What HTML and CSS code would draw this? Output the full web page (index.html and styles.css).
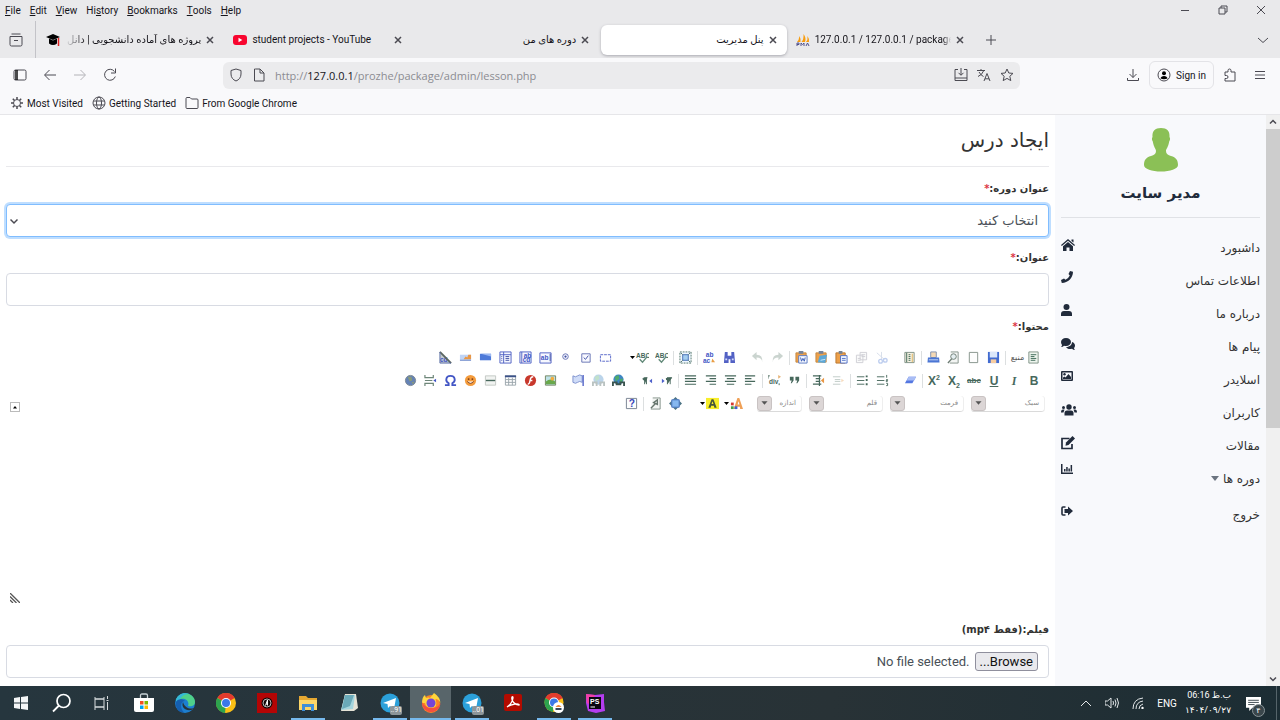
FILE: index.html
```html
<!DOCTYPE html>
<html lang="fa">
<head>
    <meta charset="UTF-8">
    <meta name="viewport" content="width=device-width, initial-scale=1.0">
    <title>پنل مدیریت</title>
    <link rel="stylesheet" href="styles.css">
</head>
<body>
    <!-- menu bar -->
    <header class="menubar">
        <nav class="menus">
            <button><u>F</u>ile</button>
            <button><u>E</u>dit</button>
            <button><u>V</u>iew</button>
            <button>Hi<u>s</u>tory</button>
            <button><u>B</u>ookmarks</button>
            <button><u>T</u>ools</button>
            <button><u>H</u>elp</button>
        </nav>
        <div class="window-buttons">
            <button aria-label="Minimize"><svg class="i10" viewBox="0 0 10 10"><path d="M1 5.5h8" class="line"/></svg></button>
            <button aria-label="Restore"><svg class="i10" viewBox="0 0 10 10"><path d="M1 3h6v6H1zM3 3V1h6v6H7" class="line"/></svg></button>
            <button aria-label="Close"><svg class="i10" viewBox="0 0 10 10"><path d="M1 1l8 8M9 1L1 9" class="line"/></svg></button>
        </div>
    </header>

    <!-- tabs -->
    <div class="tabbar">
        <button class="tab-list" aria-label="Tabs"><svg class="i14" viewBox="0 0 14 14"><path d="M2.500 1h9M1 3.500h12v8a1.500 1.500 0 0 1-1.500 1.500h-9A1.500 1.500 0 0 1 1 11.500zM5 7.500h4" class="line"/></svg></button>
        <div class="tabs">
            <div class="tab">
                <svg class="i14" viewBox="0 0 14 14"><path d="M7 1l7 3-7 3-7-3z"/><path d="M3 5.500v5q4 3 8 0v-5L7 7.500z"/><path d="M12.500 5v8" stroke="#e02424" stroke-width="1.500"/></svg>
                <span class="tab-title fa fade">پروژه های آماده دانشجویی | دانل</span>
                <button class="tab-close" aria-label="Close tab"><svg class="i8" viewBox="0 0 8 8"><path d="M1 1l6 6M7 1L1 7" class="line bold"/></svg></button>
            </div>
            <div class="tab">
                <svg class="i14" viewBox="0 0 14 14"><rect y="2" width="14" height="10" rx="3" fill="#f8052f"/><path d="M5.500 4.800v4.400L9.300 7z" fill="#fff"/></svg>
                <span class="tab-title">student projects - YouTube</span>
                <button class="tab-close" aria-label="Close tab"><svg class="i8" viewBox="0 0 8 8"><path d="M1 1l6 6M7 1L1 7" class="line bold"/></svg></button>
            </div>
            <div class="tab">
                <span class="tab-title fa">دوره های من</span>
                <button class="tab-close" aria-label="Close tab"><svg class="i8" viewBox="0 0 8 8"><path d="M1 1l6 6M7 1L1 7" class="line bold"/></svg></button>
            </div>
            <div class="tab active">
                <span class="tab-title fa">پنل مدیریت</span>
                <button class="tab-close" aria-label="Close tab"><svg class="i8" viewBox="0 0 8 8"><path d="M1 1l6 6M7 1L1 7" class="line bold"/></svg></button>
            </div>
            <div class="tab">
                <svg class="i14" viewBox="0 0 14 14"><path d="M1 9q2-2 2.500-6 1.500 3 1 6zM5.500 9Q8 6 7.500 1q3 4 1.500 8zM10 9q2-2 1.500-6 2 3 1.500 6z" fill="#f89c0e"/><path d="M1 13v-3h2v1.500H1M5 13v-3l1.500 1.500L8 10v3M10 13l1.500-3 1.500 3" fill="none" stroke="#50518c"/></svg>
                <span class="tab-title fade-end">127.0.0.1 / 127.0.0.1 / package /</span>
                <button class="tab-close" aria-label="Close tab"><svg class="i8" viewBox="0 0 8 8"><path d="M1 1l6 6M7 1L1 7" class="line bold"/></svg></button>
            </div>
        </div>
        <button class="new-tab" aria-label="New tab"><svg class="i10" viewBox="0 0 10 10"><path d="M5 0v10M0 5h10" class="line"/></svg></button>
        <button class="all-tabs" aria-label="List all tabs"><svg class="i10" viewBox="0 0 10 10"><path d="M0 3l5 4.500L10 3" class="line"/></svg></button>
    </div>

    <!-- address bar -->
    <div class="navbar">
        <div class="nav-buttons">
            <button aria-label="Sidebar"><svg class="i14" viewBox="0 0 14 14"><rect x="1" y="2" width="12" height="10" rx="1.500" class="line"/><path d="M2 2h3v10H2z" opacity=".7"/></svg></button>
            <button aria-label="Back"><svg class="i14" viewBox="0 0 14 14"><path d="M13 7H2M6.500 2L1.500 7l5 5" class="line"/></svg></button>
            <button aria-label="Forward" disabled><svg class="i14" viewBox="0 0 14 14"><path d="M1 7h11M7.500 2l5 5-5 5" class="line"/></svg></button>
            <button aria-label="Reload"><svg class="i14" viewBox="0 0 14 14"><path d="M12.300 8.500A5.500 5.500 0 1 1 11.500 3.500M12.500 0.500v4.500H8" class="line"/></svg></button>
        </div>
        <div class="urlbar">
            <svg class="i14" viewBox="0 0 14 14"><path d="M7 1l5 1.500v3.500c0 3.500-2 5.800-5 7-3-1.200-5-3.500-5-7V2.500z" class="line"/></svg>
            <svg class="i14" viewBox="0 0 14 14"><path d="M3.500 1H8l4 4v8H2.500V1zM8 1v4h4" class="line"/></svg>
            <span class="url">http://<b>127.0.0.1</b>/prozhe/package/admin/lesson.php</span>
            <button aria-label="Install"><svg class="i14" viewBox="0 0 14 14"><path d="M4 1.500H1v11h12v-11h-3M1 10h12M7 0v7M4.500 4.800L7 7.300l2.500-2.500" class="line"/></svg></button>
            <button aria-label="Translate"><svg class="i14" viewBox="0 0 14 14"><path d="M0 2.500h8M4 1v1.500M6.500 3Q5 7 1 8.500M2 4q2 3.500 4.500 4.500M7 13l3-7.500L13 13M8 10.800h4" class="line"/></svg></button>
            <button aria-label="Bookmark"><svg class="i14" viewBox="0 0 14 14"><path d="M7 1l1.800 4 4.200.4-3.200 2.900 1 4.300L7 10.400l-3.800 2.200 1-4.300L1 5.400 5.200 5z" class="line"/></svg></button>
        </div>
        <div class="nav-buttons end">
            <button aria-label="Downloads"><svg class="i14" viewBox="0 0 14 14"><path d="M7 1v8.500M3.500 6L7 9.500 10.500 6M1.500 10v2.500h11V10" class="line"/></svg></button>
            <button class="sign-in"><svg class="i14" viewBox="0 0 14 14"><circle cx="7" cy="7" r="6" class="line"/><circle cx="7" cy="5.300" r="2"/><path d="M3.500 10.500Q4 8 7 8t3.500 2.500Q7 12 3.500 10.500z"/></svg>Sign in</button>
            <button aria-label="Extensions"><svg class="i14" viewBox="0 0 14 14"><path d="M2 4h3V2.500a1.500 1.500 0 0 1 3 0V4h4v9H2v-2.500h1.500a1.500 1.500 0 0 0 0-3H2z" class="line"/></svg></button>
            <button aria-label="Menu"><svg class="i14" viewBox="0 0 14 14"><path d="M2 3.500h10M2 7h10M2 10.500h10" class="line"/></svg></button>
        </div>
    </div>

    <!-- bookmarks -->
    <nav class="bookmarks">
        <a href="#"><svg class="i14" viewBox="0 0 14 14"><circle cx="7" cy="7" r="3.500" class="line"/><path d="M7 1v2.500M7 10.500V13M1 7h2.500M10.500 7H13M2.800 2.800l1.700 1.700M9.500 9.500l1.700 1.700M2.800 11.200l1.700-1.700M9.500 4.500l1.700-1.700" class="line bold"/></svg>Most Visited</a>
        <a href="#"><svg class="i14" viewBox="0 0 14 14"><circle cx="7" cy="7" r="6" class="line"/><ellipse cx="7" cy="7" rx="2.500" ry="6" class="line"/><path d="M1.500 5h11M1.500 9h11" class="line"/></svg>Getting Started</a>
        <a href="#"><svg class="i14" viewBox="0 0 14 14"><path d="M1 11.500v-9q0-1 1-1h3L6.500 3H12q1 0 1 1v7.500q0 1-1 1H2q-1 0-1-1z" class="line"/></svg>From Google Chrome</a>
    </nav>

    <!-- page -->
    <div class="viewport">
        <div class="page" dir="rtl">
            <aside class="sidebar">
                <svg class="avatar" viewBox="0 0 34 44"><path d="M17 0c6 0 9 3 8.500 9 .8 1 .8 3-.3 4.500C24 20 22 21 22 23c0 3 2 4 5 5 5 1.500 7 4 7 9 0 4-8 6.500-17 6.500S0 41 0 37c0-5 2-7.500 7-9 3-1 5-2 5-5 0-2-2-3-3.200-9.500C7.700 12 7.700 10 8.500 9 8 3 11 0 17 0z" fill="#8bc056"/></svg>
                <h2 class="admin-name">مدیر سایت</h2>
                <ul class="side-menu">
                    <li><a href="#">داشبورد</a><svg class="i14" viewBox="0 0 14 14"><path d="M7 1l7 6-.8.900L7 2.800.8 7.900 0 7z"/><path d="M7 4l5 4.200V13H8.500V9.500h-3V13H2V8.200zM10.500 1.500h2v3l-2-1.500z"/></svg></li>
                    <li><a href="#">اطلاعات تماس</a><svg class="i12" viewBox="0 0 12 12"><path d="M9 0l3 .8C12 7 7 12 .8 12L0 9l3-1.500 1.500 1.300q3-1.500 4.300-4.300L7.500 3z"/></svg></li>
                    <li><a href="#">درباره ما</a><svg class="i12" viewBox="0 0 12 12"><circle cx="5.500" cy="3" r="3"/><path d="M0 12v-2q0-3 3-3h5q3 0 3 3v2z"/></svg></li>
                    <li><a href="#">پیام ها</a><svg class="i14" viewBox="0 0 14 14"><path d="M5 1C8 1 10 3 10 5S8 9 5 9q-1 0-2-.3Q2 10 0 10q1-1 1-2-1-1.500-1-3c0-2 2-4 5-4z"/><path d="M11 5c2 .5 3 2 3 3.500q0 1.500-1 2.500 0 1 1 2-2 0-3-1.200c-3 .8-5-.3-6-1.800 4 0 6-2.500 6-5z"/></svg></li>
                    <li><a href="#">اسلایدر</a><svg class="i12" viewBox="0 0 12 12"><path fill-rule="evenodd" d="M1 1h10q1 0 1 1v8q0 1-1 1H1q-1 0-1-1V2q0-1 1-1zm.5 1.500v7h9v-7z"/><circle cx="3.500" cy="4.300" r="1.200"/><path d="M2 9V7.500l1.500-1L4.500 7.500 7.500 4 10 7v2z"/></svg></li>
                    <li><a href="#">کاربران</a><svg class="i14 wide" viewBox="0 0 16 14"><circle cx="8" cy="4" r="2.700"/><path d="M3.500 12.500V10q0-2.500 2.500-2.500h4q2.500 0 2.500 2.500v2.500z"/><circle cx="2.500" cy="4.500" r="1.500"/><circle cx="13.500" cy="4.500" r="1.500"/><path d="M0 9.500q0-3 2-3h1.500L2.500 9.500zM16 9.500q0-3-2-3h-1.500l1 3z"/></svg></li>
                    <li><a href="#">مقالات</a><svg class="i14" viewBox="0 0 14 14"><path d="M8.500 2.500H1v10h10V8" fill="none" stroke="#212b3b" stroke-width="1.700"/><path d="M11.500 0L14 2.500 7.500 9 4.500 9.700 5 6.500z"/></svg></li>
                    <li class="dropdown"><a href="#">دوره ها <svg class="caret" viewBox="0 0 8 5"><path d="M0 0h8L4 5z"/></svg></a><svg class="i12" viewBox="0 0 12 12"><path d="M0 1h1.500v8.500H12V11H0zM3 6h1.500v2.500H3zM5.200 4h1.500v4.500H5.200zM7.400 5.500h1.500v3H7.400zM9.600 2h1.500v6.500H9.600z"/></svg></li>
                    <li><a href="#">خروج</a><svg class="i12" viewBox="0 0 12 12"><path d="M4.500 2H2q-1 0-1 1v6q0 1 1 1h2.500" fill="none" stroke="#212b3b" stroke-width="1.600"/><path d="M7 1.500L12 6l-5 4.500V8H3.500V4H7z"/></svg></li>
                </ul>
            </aside>

            <main class="content">
                <h1 class="title">ایجاد درس</h1>
                <form>
                    <div class="form-group">
                        <label for="course">عنوان دوره:<i class="req">*</i></label>
                        <div class="select-wrap">
                            <select id="course" class="form-control focused"><option>انتخاب کنید</option></select>
                            <svg class="i8" viewBox="0 0 8 8"><path d="M.5 2.500L4 6l3.500-3.500" class="line bold"/></svg>
                        </div>
                    </div>
                    <div class="form-group">
                        <label for="name">عنوان:<i class="req">*</i></label>
                        <input id="name" type="text" class="form-control">
                    </div>

                    <div class="form-group">
                        <label for="body">محتوا:<i class="req">*</i></label>
                        <div class="editor">
                            <div class="toolbar">
                                <div class="tool-row">
                                    <div class="tools">
                                        <button type="button" class="source"><svg viewBox="0 0 14 14"><path d="M2 1h10v12H2z" fill="#eef5ee" stroke="#7d9184"/><path d="M4 4h6M4 6h4M4 8h6M4 10h5" stroke="#386652"/></svg>منبع</button>
                                        <span class="sep"></span>
                                        <button type="button" aria-label="Save"><svg viewBox="0 0 14 14"><path d="M1 1h12v12H1z" fill="#416bd0"/><path d="M3 1h8v6H3z" fill="#dbe7fa"/><path d="M4 9h6v4H4z" fill="#f8cda0"/></svg></button>
                                        <button type="button" aria-label="New page"><svg viewBox="0 0 14 14"><path d="M2.500 1.500h9v11h-9z" fill="#fdfdfd" stroke="#839188"/></svg></button>
                                        <button type="button" aria-label="Preview"><svg viewBox="0 0 14 14"><path d="M4 1h8v12H3" fill="#f3f5f3" stroke="#839188"/><circle cx="7" cy="6" r="3" fill="#e4eef0" stroke="#6d7c74"/><path d="M5 8.500L1 13" stroke="#6d7c74" stroke-width="1.500"/></svg></button>
                                        <button type="button" aria-label="Print"><svg viewBox="0 0 14 14"><path d="M4 1h6v6H4z" fill="#f5d9b4" stroke="#7c8fae"/><path d="M1 7h12l.5 5.500H.5z" fill="#4b76d4"/><path d="M2 9.500h10" stroke="#cad9f6"/></svg></button>
                                        <span class="sep"></span>
                                        <button type="button" aria-label="Templates"><svg viewBox="0 0 14 14"><path d="M2 1.500h10v11H2z" fill="#f6f1e2" stroke="#809186"/><path d="M4 2v10M6 4h2M6 6h2M6 8h2M6 10h2" stroke="#386652"/><path d="M10 3v9" stroke="#e0b45f"/></svg></button>
                                    </div>
                                    <div class="tools">
                                        <button type="button" aria-label="Cut" disabled><svg viewBox="0 0 14 14"><path d="M2 2l8 7M7 1v8" stroke="#8b9fc4"/><circle cx="6" cy="11" r="2" fill="none" stroke="#4976d2" stroke-width="1.500"/><circle cx="11" cy="10" r="2" fill="none" stroke="#4976d2" stroke-width="1.500"/></svg></button>
                                        <button type="button" aria-label="Copy" disabled><svg viewBox="0 0 14 14"><path d="M1.500 4.500h7v8h-7zM5.500 1.500h7v8h-7z" fill="#f3f5f5" stroke="#778"/><path d="M7 4h4M7 6h4M3 8h3M3 10h3" stroke="#778"/></svg></button>
                                        <button type="button" aria-label="Paste"><svg viewBox="0 0 14 14"><path d="M1 2h10v11H1z" fill="#eda04a" stroke="#b8762f"/><path d="M4 0h4v3H4z" fill="#768392"/><path d="M6 5h7v8H6z" fill="#f5f8ff" stroke="#4b6ec7"/><path d="M7.500 8h4M7.500 10h4" stroke="#4b6ec7"/></svg></button>
                                        <button type="button" aria-label="Paste text"><svg viewBox="0 0 14 14"><path d="M1 2h11v10H1z" fill="#eda04a" stroke="#c28843"/><path d="M4 0h5v3H4z" fill="#75839a"/><path d="M5 5l8-1-2 9-8-1z" fill="#5da8d8"/><path d="M6 10l5-1" stroke="#d3ecfa"/></svg></button>
                                        <button type="button" aria-label="Paste from Word"><svg viewBox="0 0 14 14"><path d="M1 2h11v10H1z" fill="#eda04a" stroke="#c28843"/><path d="M4 0h5v3H4z" fill="#75839a"/><path d="M4 5h9v8H4z" fill="#f6f9ff" stroke="#5877c2"/><path d="M6 7l1 4 1.500-3L10 11l1-4" fill="none" stroke="#3458b4"/></svg></button>
                                        <span class="sep"></span>
                                        <button type="button" aria-label="Redo" disabled><svg viewBox="0 0 14 14"><path d="M2 12q0-5 6-5v3l5-4.500L8 1v3Q1 4 2 12z" fill="#6b8577"/></svg></button>
                                        <button type="button" aria-label="Undo" disabled><svg viewBox="0 0 14 14"><path d="M12 12q0-5-6-5v3L1 5.500 6 1v3q7 0 6 8z" fill="#6b8577"/></svg></button>
                                    </div>
                                    <div class="tools">
                                        <button type="button" aria-label="Find"><svg viewBox="0 0 14 14"><path d="M2 1h3v4h4V1h3l1 12H8V9H6v4H1z" fill="#5261c4"/><path d="M2.500 9h2M9.500 9h2" stroke="#d1d8ff" stroke-width="2"/></svg></button>
                                        <button type="button" aria-label="Replace"><svg viewBox="0 0 14 14"><text x="3" y="6" class="glyph blue">ab</text><text x="0" y="13" class="glyph blue">ac</text><path d="M10 8l3 4H9z" fill="#e99d45"/></svg></button>
                                        <span class="sep"></span>
                                        <button type="button" aria-label="Select all"><svg viewBox="0 0 14 14"><path d="M1 1h12v12H1z" fill="#eff7ff" stroke="#507469" stroke-dasharray="2 1"/><path d="M4 4h6v6H4z" fill="#a5cff0" stroke="#446db5"/><path d="M2 2l2 2M12 2l-2 2M2 12l2-2M12 12l-2-2" stroke="#507469"/></svg></button>
                                        <span class="sep"></span>
                                        <button type="button" aria-label="Check spelling"><svg viewBox="0 0 14 14"><text x="0" y="7" class="glyph green">ABC</text><path d="M4 9l3 3 5-6" fill="none" stroke="#628a79" stroke-width="1.500"/></svg></button>
                                        <button type="button" class="split" aria-label="Spell check as you type"><svg viewBox="0 0 14 14"><text x="0" y="7" class="glyph green">ABC</text><path d="M4 9l3 3 5-6" fill="none" stroke="#628a79" stroke-width="1.500"/></svg><svg class="arrow" viewBox="0 0 5 3"><path d="M0 0h5L2.500 3z"/></svg></button>
                                    </div>
                                    <div class="tools fields">
                                        <button type="button" aria-label="Form"><svg viewBox="0 0 14 14"><path d="M1.500 4h11v7h-11z" fill="none" stroke="#5465c8" stroke-dasharray="3 1"/></svg></button>
                                        <button type="button" aria-label="Checkbox"><svg viewBox="0 0 14 14"><path d="M3 3h9v9H3z" fill="#f8f9ff" stroke="#6370b2"/><path d="M5 7l2 2 3-4" fill="none" stroke="#3b4ca2"/></svg></button>
                                        <button type="button" aria-label="Radio"><svg viewBox="0 0 14 14"><circle cx="7" cy="6" r="3" fill="#f8f9ff" stroke="#6370b2"/><circle cx="7" cy="6" r="1.200" fill="#3b4ca2"/></svg></button>
                                        <button type="button" aria-label="Text field"><svg viewBox="0 0 14 14"><path d="M1 2h12v11H1z" fill="#f6f8ff" stroke="#4e5fc3"/><text x="2" y="10" class="glyph blue">ab</text><path d="M12 3v8" stroke="#3b4ca2"/></svg></button>
                                        <button type="button" aria-label="Textarea"><svg viewBox="0 0 14 14"><path d="M1 1h12v12H1z" fill="#f6f8ff" stroke="#4e5fc3"/><text x="5" y="7" class="glyph blue">ab</text><text x="4" y="12" class="glyph blue">cd</text><path d="M3 1v12" stroke="#4e5fc3"/></svg></button>
                                        <button type="button" aria-label="Selection field"><svg viewBox="0 0 14 14"><path d="M1 1h12v12H1zM5 1v12M1 4h12" fill="#f6f8ff" stroke="#4e5fc3"/><path d="M7 6h4M7 8h4M7 10h4M2.500 6h1M2.500 8h1M2.500 10h1" stroke="#3b4ca2"/></svg></button>
                                        <button type="button" aria-label="Button"><svg viewBox="0 0 14 14"><path d="M1 3h12v7H1z" fill="#4e7ad9"/><path d="M2 3h11v3z" fill="#9db9f3"/></svg></button>
                                        <button type="button" aria-label="Image button"><svg viewBox="0 0 14 14"><path d="M1 4h12v6H1z" fill="#bfd4f6"/><path d="M5 9l2-3 2 1 1-3h3v5z" fill="#e99745"/><path d="M1 10h12" stroke="#6c87c8"/></svg></button>
                                        <button type="button" aria-label="Hidden field"><svg viewBox="0 0 14 14"><path d="M1 1v12h12z" fill="#c3cad0"/><text x="1" y="12" class="glyph blue">cd</text><path d="M1 1l12 12" stroke="#5b6660" stroke-width="2"/><path d="M1 1v12h12" fill="none" stroke="#546aa4"/></svg></button>
                                    </div>
                                </div>

                                <div class="tool-row">
                                    <div class="tools">
                                        <button type="button" class="t"><b>B</b></button>
                                        <button type="button" class="t serif"><i>I</i></button>
                                        <button type="button" class="t"><u>U</u></button>
                                        <button type="button" class="t small"><s>abc</s></button>
                                        <button type="button" class="t" dir="ltr">X<sub>2</sub></button>
                                        <button type="button" class="t" dir="ltr">X<sup>2</sup></button>
                                        <span class="sep"></span>
                                        <button type="button" aria-label="Remove format"><svg viewBox="0 0 14 14"><path d="M5 3h8l-4 7H1z" fill="#5477e1"/><path d="M5 3h8l-2 4H3z" fill="#a9bdf5"/></svg></button>
                                    </div>
                                    <div class="tools">
                                        <button type="button" aria-label="Numbered list"><svg viewBox="0 0 14 14"><path d="M1 3h8M1 7h8M1 11h8M11.500 1v3M11 6h1.500v1H11v1h1.500M11 10h1.500v2.500H11" fill="none" stroke="#47685c"/></svg></button>
                                        <button type="button" aria-label="Bulleted list"><svg viewBox="0 0 14 14"><path d="M1 3h8M1 7h8M1 11h8" stroke="#47685c"/><path d="M10.500 1.500h2v2h-2zM10.500 5.500h2v2h-2zM10.500 10h2v2h-2z" fill="#47685c"/></svg></button>
                                        <span class="sep"></span>
                                        <button type="button" aria-label="Increase indent"><svg viewBox="0 0 14 14"><path d="M1 3h8M3 6h6M3 8h6M1 11h8" stroke="#47685c" opacity=".35"/><path d="M10 5l3 2-3 2z" fill="#e99745" opacity=".35"/></svg></button>
                                        <button type="button" aria-label="Decrease indent"><svg viewBox="0 0 14 14"><path d="M1 2h9M4 5h5M4 8h5M1 11h9M8 1v12" stroke="#47685c" stroke-width="1.300"/><path d="M13 4L9.500 7l3.500 3z" fill="#e99745"/></svg></button>
                                        <span class="sep"></span>
                                        <button type="button" aria-label="Quote"><svg viewBox="0 0 14 14"><path d="M2 3h4v4l-2 3H3l1-3H2zM8 3h4v4l-2 3H9l1-3H8z" fill="#47685c"/></svg></button>
                                        <button type="button" aria-label="Div container"><svg viewBox="0 0 14 14"><text x="1" y="11" class="glyph green">div</text><path d="M0 5V2h2M12 10v2" fill="none" stroke="#47685c"/><path d="M11 1l3 2-3 2z" fill="#e7b478"/></svg></button>
                                        <span class="sep"></span>
                                        <button type="button" aria-label="Align left"><svg viewBox="0 0 14 14"><path d="M1 2h11M1 5h7M1 8h11M1 11h7" class="rule"/></svg></button>
                                        <button type="button" aria-label="Center"><svg viewBox="0 0 14 14"><path d="M1 2h12M3 5h8M1 8h12M3 11h8" class="rule"/></svg></button>
                                        <button type="button" aria-label="Align right"><svg viewBox="0 0 14 14"><path d="M2 2h11M6 5h7M2 8h11M6 11h7" class="rule"/></svg></button>
                                        <button type="button" aria-label="Justify"><svg viewBox="0 0 14 14"><path d="M1 2h12M1 5h12M1 8h12M1 11h12" class="rule"/></svg></button>
                                        <span class="sep"></span>
                                        <button type="button" aria-label="Left to right"><svg viewBox="0 0 14 14"><path d="M8 11V4h5M11 4v7M8 4q-3 1 0 3" fill="#47685c" stroke="#47685c"/><path d="M2 5l3 2.500L2 10z" fill="#4c5fca"/></svg></button>
                                        <button type="button" aria-label="Right to left"><svg viewBox="0 0 14 14"><path d="M5 11V4h3M7 4v7M5 4Q1 5 5 7" fill="#47685c" stroke="#47685c"/><path d="M13 5l-3 2.500 3 2.500z" fill="#4c5fca"/></svg></button>
                                    </div>
                                    <div class="tools">
                                        <button type="button" aria-label="Link"><svg viewBox="0 0 14 14"><circle cx="7" cy="6" r="5.500" fill="#3f86c4"/><path d="M3 3l4-2 1 4-4 3zM9 5l3 0-1 4H8z" fill="#4eaa6c"/><path d="M1 13V9h4v2h4V9h4v4" fill="none" stroke="#3c5550" stroke-width="2"/></svg></button>
                                        <button type="button" aria-label="Unlink" disabled><svg viewBox="0 0 14 14"><circle cx="7" cy="6" r="5.500" fill="#3f86c4"/><path d="M3 3l4-2 1 4-4 3z" fill="#4eaa6c"/><path d="M1 13V9h4v4M9 13V9h4v4" fill="none" stroke="#3c5550" stroke-width="2"/></svg></button>
                                        <button type="button" aria-label="Anchor"><svg viewBox="0 0 14 14"><path d="M1 2q3 2 5 0t5 0v7q-3-2-5 0t-5 0z" fill="#cfdcf8" stroke="#7b8fcc"/><path d="M12 1v12" stroke="#5465c8" stroke-width="1.500"/></svg></button>
                                    </div>
                                    <div class="tools">
                                        <button type="button" aria-label="Image"><svg viewBox="0 0 14 14"><path d="M1.500 2h11v10h-11z" fill="#bfe2e8" stroke="#71845e"/><path d="M2 11V8q5-4 10 0v3z" fill="#69a94c"/><circle cx="9" cy="5" r="2" fill="#f2ad3f"/></svg></button>
                                        <button type="button" aria-label="Flash"><svg viewBox="0 0 14 14"><circle cx="7" cy="7" r="6" fill="#c8382c"/><path d="M10 3Q7 3 6.500 7T4 11M6 7h3" fill="none" stroke="#fff" stroke-width="1.500"/></svg></button>
                                        <button type="button" aria-label="Table"><svg viewBox="0 0 14 14"><path d="M1.500 2h11v10h-11zM1.500 6h11M1.500 9h11M5 4v8M9 4v8" fill="#fff" stroke="#98a4ab"/><path d="M1 2.500h12" stroke="#3b5188" stroke-width="2"/></svg></button>
                                        <button type="button" aria-label="Horizontal line"><svg viewBox="0 0 14 14"><path d="M1.500 2h11v10h-11z" fill="#f1f3f1" stroke="#c1c7c2"/><path d="M2 7h10" stroke="#47685c" stroke-width="1.500"/></svg></button>
                                        <button type="button" aria-label="Smiley"><svg viewBox="0 0 14 14"><circle cx="7" cy="7" r="6" fill="#f39b3c"/><circle cx="5" cy="5.500" r="1" fill="#7b3a14"/><circle cx="9" cy="5.500" r="1" fill="#7b3a14"/><path d="M3.500 8q3.500 4 7 0" fill="#fff" stroke="#7b3a14"/></svg></button>
                                        <button type="button" aria-label="Special character"><svg viewBox="0 0 14 14"><path d="M1 12h4v-2Q2 8 2.500 5.500 3 2 7 2t4.500 3.500Q12 8 9 10v2h4" fill="none" stroke="#4356c5" stroke-width="2"/></svg></button>
                                        <button type="button" aria-label="Page break"><svg viewBox="0 0 14 14"><path d="M1 1v3h9V1M1 13v-3h9v3M1 7h8" fill="none" stroke="#6e8679" stroke-width="1.300"/><path d="M13 5l-3 2 3 2z" fill="#4356c5"/></svg></button>
                                        <button type="button" aria-label="IFrame"><svg viewBox="0 0 14 14"><circle cx="7" cy="7" r="5.500" fill="#6482b6" stroke="#7c8893"/><path d="M4 3l4 0 1 4-3 1zM8 9l3-1-1 3z" fill="#8a9a79"/></svg></button>
                                    </div>
                                </div>

                                <div class="tool-row">
                                    <button type="button" class="combo"><span>سبک</span><svg class="combo-arrow" viewBox="0 0 15 15"><path d="M4 5h7L7.500 9z"/></svg></button>
                                    <button type="button" class="combo"><span>فرمت</span><svg class="combo-arrow" viewBox="0 0 15 15"><path d="M4 5h7L7.500 9z"/></svg></button>
                                    <button type="button" class="combo"><span>قلم</span><svg class="combo-arrow" viewBox="0 0 15 15"><path d="M4 5h7L7.500 9z"/></svg></button>
                                    <button type="button" class="combo short"><span>اندازه</span><svg class="combo-arrow" viewBox="0 0 15 15"><path d="M4 5h7L7.500 9z"/></svg></button>
                                    <div class="tools colors">
                                        <button type="button" class="split" aria-label="Text color"><svg viewBox="0 0 14 14"><path d="M4 13L8 1h2l4 12h-3l-.5-2.500h-3L7 13zM8.200 8h2L9.200 4.500z" fill="#efa057"/><path d="M1 6h3v3H1z" fill="#d43b30"/><path d="M1 10h3v3H1z" fill="#3fa04a"/><path d="M5 10h3v3H5z" fill="#3f61d4"/></svg><svg class="arrow" viewBox="0 0 5 3"><path d="M0 0h5L2.500 3z"/></svg></button>
                                        <button type="button" class="split" aria-label="Background color"><svg viewBox="0 0 14 14"><path d="M0 1h14v12H0z" fill="#f8ee2b"/><path d="M2.500 11.500L6 2.500h2l3.500 9H9l-.5-2h-3l-.5 2zM6 7.500h2l-1-3z" fill="#47563b"/></svg><svg class="arrow" viewBox="0 0 5 3"><path d="M0 0h5L2.500 3z"/></svg></button>
                                    </div>
                                    <div class="tools view">
                                        <button type="button" aria-label="Maximize"><svg viewBox="0 0 14 14"><path d="M7 0l3 3H4zM7 14l3-3H4zM0 7l3-3v6zM14 7l-3-3v6z" fill="#4c7485"/><path d="M3 3h8v8H3z" fill="#86b8ef" stroke="#3f6db7"/></svg></button>
                                        <button type="button" aria-label="Show blocks"><svg viewBox="0 0 14 14"><path d="M4 1h8v12H2" fill="#f3f5f3" stroke="#839188"/><path d="M5 6l4-3v5zM2 12l5-5" fill="none" stroke="#66756d" stroke-width="1.500"/></svg></button>
                                        <span class="sep"></span>
                                        <button type="button" aria-label="About"><svg viewBox="0 0 14 14"><path d="M1.500 1.500h11v11h-11z" fill="#fdfdfd" stroke="#75808f"/><text x="4" y="11" class="glyph help">?</text></svg></button>
                                    </div>
                                </div>
                                <button type="button" class="collapse" aria-label="Collapse toolbar"><svg viewBox="0 0 8 8"><path d="M2 5.500h4L4 3z"/></svg></button>
                            </div>
                            <textarea id="body" class="editor-body"></textarea>
                            <svg class="resizer" viewBox="0 0 10 10"><path d="M0 0l10 10M0 3.500L6.500 10M0 7l3 3" stroke="#555" stroke-width="1.300"/></svg>
                        </div>
                    </div>

                    <div class="form-group">
                        <label for="film">فیلم:(فقط mp۴)</label>
                        <label class="form-control file-box">
                            <input id="film" type="file" class="file-input">
                            <span class="browse">Browse...</span>
                            <span dir="ltr">No file selected.</span>
                        </label>
                    </div>
                </form>
            </main>
        </div>
        <div class="scrollbar">
            <svg class="i14" viewBox="0 0 14 14"><path d="M4 8.500l3-3 3 3" class="line bold"/></svg>
            <div class="track"><div class="thumb"></div></div>
            <svg class="i14" viewBox="0 0 14 14"><path d="M4 5.500l3 3 3-3" class="line bold"/></svg>
        </div>
    </div>

    <!-- taskbar -->
    <footer class="taskbar">
        <div class="apps">
            <button aria-label="Start"><svg viewBox="0 0 20 20"><path d="M3 5l6-1v5.500H3zM10 4l7-1v6.500h-7zM3 10.500h6V16l-6-1zM10 10.500h7V17l-7-1z" fill="#f4f6f7"/></svg></button>
            <button aria-label="Search"><svg viewBox="0 0 20 20"><circle cx="11.500" cy="8" r="6.500" fill="none" stroke="#fff" stroke-width="1.700"/><path d="M7 12.500L1 18.500" stroke="#fff" stroke-width="1.800"/></svg></button>
            <button aria-label="Task view"><svg viewBox="0 0 20 20"><path d="M2 4v2h9V4M2 17v-3h9v3M2 6h9v8H2zM14.500 3v3M14.500 9v8M13.500 7.500h2" fill="none" stroke="#d7dcde"/></svg></button>
            <button aria-label="Store"><svg viewBox="0 0 20 20"><path d="M6.500 5V2.500q0-1.500 1.500-1.500h4q1.500 0 1.500 1.500V5" fill="none" stroke="#c8d2d6" stroke-width="1.300"/><path d="M0 5h20v12q0 2-2 2H2q-2 0-2-2z" fill="#fff"/><path d="M6 8h3.500v3.500H6z" fill="#f25022"/><path d="M10.500 8H14v3.500h-3.500z" fill="#7fba00"/><path d="M6 12.500h3.500V16H6z" fill="#00a4ef"/><path d="M10.500 12.500H14V16h-3.500z" fill="#ffb900"/></svg></button>
            <button aria-label="Edge"><svg viewBox="0 0 20 20"><circle cx="10" cy="10" r="10" fill="#1d7fd0"/><path d="M1 7C3 1 9-1 14 1c4 1.500 6 5 6 8 0 4-4 5-7 4 2-5-3-8-7-7-2 .3-4 1-5 2z" fill="#4fd08a"/><path d="M1 7C3 1 9-1 14 1c-4 0-8 2-9 6-2 0-3 1-4 2z" fill="#35b8d8"/><path d="M8 9c-2 5 2 9 8 8 1-.3 2-1 2.500-2-3 1.500-9 0-10.500-6z" fill="#26343b"/><path d="M1 9c1-3 6-4 9-1-4 0-6 6-1 11.500C4 20 0 15 1 9z" fill="#155fb0"/></svg></button>
            <button aria-label="Chrome"><svg viewBox="0 0 20 20"><circle cx="10" cy="10" r="10" fill="#fbc116"/><path d="M10 10L1.300 5A10 10 0 0 1 18.700 5z" fill="#e33b2e"/><path d="M10 10L1.300 5a10 10 0 0 0 7.700 15z" fill="#2da44e"/><circle cx="10" cy="10" r="5" fill="#fff"/><circle cx="10" cy="10" r="4" fill="#3b78e7"/></svg></button>
            <button aria-label="Recorder"><svg viewBox="0 0 20 20"><path d="M0 0h20v20H0z" fill="#b40505"/><circle cx="10" cy="10" r="5.500" fill="#130808"/><circle cx="10" cy="10" r="4" fill="none" stroke="#ddd" stroke-width=".8"/><path d="M8.500 12.500L10.500 7v5.500M9 11h2" fill="none" stroke="#fff"/></svg></button>
            <button class="running" aria-label="Explorer"><svg viewBox="0 0 20 20"><path d="M1 3h7l2 2h9v12H1z" fill="#e5a832"/><path d="M1 7h18v10H1z" fill="#fcd668"/><path d="M4 18v-7h12v7h-3v-4H7v4z" fill="#3f8fd8"/></svg></button>
            <button aria-label="Notepad"><svg viewBox="0 0 20 20"><path d="M6 1h11l2 14-4 3H2z" fill="#e5e3d6"/><path d="M6 2h10l-2 14-12 1z" fill="#a5d5dd"/><path d="M6 2h9l-4 11-8 3z" fill="#6aaab9"/></svg></button>
            <button class="running" aria-label="Telegram"><svg viewBox="0 0 20 20"><circle cx="10" cy="10" r="9.500" fill="#2ba0da"/><path d="M3 10l13-5-2 11-4-3-2 2-.5-4z" fill="#fff"/></svg><span class="count">..91</span></button>
            <button class="running current" aria-label="Firefox"><svg viewBox="0 0 20 20"><circle cx="10" cy="11" r="9" fill="#fb8426"/><path d="M1 10Q1 4 4 2l1 3q3-1 4 0L13 0q6 4 6.500 10-2-4-5-4 3 9-4.500 9-5 0-6-5z" fill="#ffd43b"/><circle cx="10" cy="10" r="4.500" fill="#7544d8"/><path d="M1 9c0 7 5 10.500 10 10 5-.5 8-4 8.500-9-2 4-5 5-9 5S3 13 1 9z" fill="#f4503f"/></svg></button>
            <button class="running" aria-label="Telegram"><svg viewBox="0 0 20 20"><circle cx="10" cy="10" r="9.500" fill="#2ba0da"/><path d="M3 10l13-5-2 11-4-3-2 2-.5-4z" fill="#fff"/></svg><span class="count">..01</span></button>
            <button aria-label="Acrobat"><svg viewBox="0 0 20 20"><rect x="1" y="1" width="18" height="17" rx="2" fill="#b30b00"/><path d="M4 14q5-3 6-9 0-2-1-1c-1 4 3 8 7 8 1-2-8-1-12 2z" fill="none" stroke="#fff" stroke-width="1.300"/></svg></button>
            <button class="running" aria-label="Chrome profile"><svg viewBox="0 0 20 20"><circle cx="10" cy="9.500" r="9.500" fill="#fbc116"/><path d="M10 10L1.300 5A10 10 0 0 1 18.700 5z" fill="#e33b2e"/><path d="M10 10L1.300 5a10 10 0 0 0 7.700 14z" fill="#2da44e"/><circle cx="10" cy="9.500" r="5" fill="#fff"/><circle cx="10" cy="9.500" r="4" fill="#3b78e7"/><circle cx="14.500" cy="14.500" r="5.500" fill="#fff"/><path d="M11.500 14q3-4 6 0z" fill="#e9853a"/><path d="M11.500 15h6v2h-6z" fill="#37475d"/></svg></button>
            <button class="running" aria-label="PhpStorm"><svg viewBox="0 0 20 20"><path d="M1 1l9 1 9-1v8l1 9-9 2-8-2-2-8z" fill="#b53df0"/><path d="M1 1l9 1-4 10-4-2z" fill="#f23fa3"/><path d="M4 4h12v12H4z" fill="#0b0712"/><path d="M5.500 14h4.500" stroke="#fff"/><text x="5" y="11" class="glyph ps">PS</text></svg></button>
        </div>
        <div class="tray">
            <svg class="i12" viewBox="0 0 12 12"><path d="M1 9l5-5 5 5" class="light"/></svg>
            <svg class="i14" viewBox="0 0 14 14"><path d="M0 5h2.500L6 2v10L2.500 9H0zM8 5q1 2 0 4M10 3.500q2 3.500 0 7M12 2q3 5 0 10" class="light"/></svg>
            <svg class="i12" viewBox="0 0 12 12"><path d="M1 12Q1 2 11 1M4 12q0-7 7-8M7 12q0-4 4-5" class="light"/><circle cx="10.500" cy="11" r="1.200" fill="#fff"/></svg>
            <span>ENG</span>
            <div class="clock"><span>06:16 ب.ظ</span><span>۱۴۰۴/۰۹/۲۷</span></div>
            <button class="notify" aria-label="Notifications"><svg class="notify-icon" viewBox="0 0 14 14"><path d="M0 1h14v10H6l-3 3v-3H0z" fill="#fff"/><path d="M2 4h10M2 6h10M2 8h6" stroke="#26343b" stroke-width=".8"/></svg><span class="badge">۴</span></button>
        </div>
    </footer>
</body>
</html>
```

FILE: styles.css
```css
/* reset */
* {
    margin: 0;
    padding: 0;
    box-sizing: border-box;
}

body {
    display: flex;
    flex-direction: column;
    height: 100vh;
    overflow: hidden;
    background-color: #fff;
    color: #15141a;
    font-family: Roboto, "Open Sans", "DejaVu Sans", sans-serif;
    font-size: 10px;
}

button {
    display: flex;
    align-items: center;
    justify-content: center;
    flex: none;
    border: 0;
    background: none;
    color: inherit;
    font: inherit;
}

a {
    color: inherit;
    text-decoration: none;
}

svg {
    flex: none;
}

.line {
    fill: none;
    stroke: #4b4a52;
    stroke-width: 1;
}

.line.bold {
    stroke-width: 1.5;
}

.light {
    fill: none;
    stroke: #e3e7e9;
}

.i8 { width: 8px; height: 8px; }
.i10 { width: 10px; height: 10px; }
.i12 { width: 12px; height: 12px; }
.i14 { width: 14px; height: 14px; }
.i14.wide { width: 16px; }

/* menu bar */
.menubar {
    display: flex;
    justify-content: space-between;
    align-items: center;
    flex: none;
    height: 20px;
    padding: 0 14px 0 5px;
    background-color: #e9e9eb;
}

.menus {
    display: flex;
    gap: 9px;
}

.window-buttons {
    display: flex;
    gap: 28px;
}

/* tabs */
.tabbar {
    display: flex;
    align-items: center;
    flex: none;
    height: 38px;
    padding-top: 1px;
    background-color: #e9e9eb;
}

.tab-list {
    width: 36px;
    height: 37px;
    padding-right: 3px;
    border-right: 1px solid #c3c3c8;
}

.tabs {
    display: flex;
    flex: 0 1 935px;
    gap: 2px;
    margin-left: 3px;
}

.tab {
    display: flex;
    align-items: center;
    flex: 1;
    gap: 5px;
    min-width: 0;
    height: 30px;
    padding: 0 10px 0 7px;
    border-radius: 6px;
}

.tab.active {
    background-color: #fff;
    box-shadow: 0 1px 3px #a9a9b0;
}

.tab-title {
    flex: 1;
    min-width: 0;
    white-space: nowrap;
}

.tab-title.fa {
    direction: rtl;
}

.tab-title.fade {
    mask-image: linear-gradient(to right, transparent, #000 20px);
}

.tab-title.fade-end {
    mask-image: linear-gradient(to left, transparent, #000 8px);
}

.new-tab {
    margin-left: 12px;
}

.all-tabs {
    margin-left: auto;
    margin-right: 12px;
}

/* address bar */
.navbar {
    display: flex;
    align-items: center;
    flex: none;
    height: 34px;
    padding: 0 13px;
    background-color: #f9f9fb;
}

.nav-buttons {
    display: flex;
    align-items: center;
    gap: 16px;
}

.nav-buttons.end {
    gap: 9px;
}

.nav-buttons.end button:last-child {
    margin-left: 7px;
}

.nav-buttons button:disabled {
    opacity: 0.4;
}

.urlbar {
    display: flex;
    align-items: center;
    flex: 1;
    gap: 9px;
    height: 27px;
    margin: 0 106px;
    padding: 0 6px;
    border-radius: 6px;
    background-color: #ebebed;
}

.url {
    flex: 1;
    color: #8b8b92;
    font-family: "Open Sans", sans-serif;
    font-size: 11px;
}

.url b {
    color: #15141a;
    font-weight: 400;
}

.sign-in {
    gap: 5px;
    height: 28px;
    padding: 0 7px;
    border: 1px solid #e3e3e7;
    border-radius: 6px;
}

/* bookmarks */
.bookmarks {
    display: flex;
    align-items: center;
    flex: none;
    gap: 9px;
    height: 23px;
    padding: 0 10px;
    border-bottom: 1px solid #e6e6e9;
    background-color: #f9f9fb;
}

.bookmarks a {
    display: flex;
    align-items: center;
    gap: 3px;
}

/* page */
.viewport {
    display: flex;
    flex: 1;
    min-height: 0;
}

.page {
    display: grid;
    grid-template-columns: 1fr 5fr;
    flex: 1;
    min-width: 0;
    overflow: hidden;
    color: #333;
    font-family: "DejaVu Sans", sans-serif;
    font-size: 12px;
}

.sidebar {
    padding: 13px 6px;
    background-color: #f8f9fc;
}

.avatar {
    display: block;
    width: 34px;
    height: 44px;
    margin: 0 auto;
}

.admin-name {
    height: 46px;
    border-bottom: 1px solid #e0e2e6;
    color: #212b3b;
    font-size: 15px;
    line-height: 42px;
    text-align: center;
}

.side-menu {
    padding-top: 13px;
    list-style: none;
}

.side-menu li {
    display: flex;
    justify-content: space-between;
    height: 33px;
    line-height: 34px;
}

.side-menu li > svg {
    margin-top: 7px;
    fill: #212b3b;
}

.side-menu .dropdown {
    height: 36px;
}

.side-menu .dropdown > svg {
    margin-top: 1px;
}

.caret {
    width: 8px;
    height: 5px;
    margin-bottom: 2px;
    fill: #6b7480;
}

/* form */
.content {
    min-width: 0;
    padding: 0 6px;
}

.title {
    height: 52px;
    margin-bottom: 10px;
    border-bottom: 1px solid #e9e9ec;
    font-size: 20px;
    font-weight: 400;
    line-height: 50px;
}

.form-group {
    margin-bottom: 9px;
}

.form-group > label:first-child {
    display: block;
    height: 27px;
    font-size: 10px;
    font-weight: 700;
    line-height: 24px;
}

.req {
    color: #dc3545;
}

.form-control {
    width: 100%;
    height: 33px;
    padding: 0 10px;
    border: 1px solid #d8dbe3;
    border-radius: 4px;
    background-color: #fff;
    color: #495057;
    font-family: "DejaVu Sans", sans-serif;
    font-size: 13px;
}

.form-control.focused {
    border-color: #80bdff;
    box-shadow: 0 0 0 2px #bfdeff;
}

.select-wrap {
    display: grid;
    align-items: center;
}

.select-wrap > * {
    grid-area: 1 / 1;
}

.select-wrap select {
    appearance: none;
    outline: none;
}

.select-wrap svg {
    justify-self: end;
    margin-left: 4px;
    pointer-events: none;
}

.file-box {
    display: flex;
    align-items: center;
    gap: 5px;
    font-family: Roboto, sans-serif;
    font-size: 13px;
}

.file-input {
    position: absolute;
    opacity: 0;
    pointer-events: none;
}

.browse {
    padding: 1px 4px;
    border: 1px solid #8f8f9d;
    border-radius: 3px;
    background-color: #e9e9ed;
    color: #111;
}

/* editor */
.editor {
    display: flex;
    flex-direction: column;
    height: 267px;
}

.toolbar {
    position: relative;
    padding: 4px 5px 0;
}

.tool-row {
    display: flex;
    align-items: center;
    gap: 8px;
    height: 23px;
}

.tools {
    display: flex;
    align-items: center;
}

.tools.colors,
.tools.view,
.tools.fields {
    margin-right: 4px;
}

.tools button {
    width: 20px;
    height: 20px;
}

.tools button svg {
    width: 13px;
    height: 13px;
}

.tools button:disabled {
    opacity: 0.35;
}

.tools .source {
    gap: 3px;
    width: 37px;
    color: #555;
    font-family: "DejaVu Sans", sans-serif;
    font-size: 8px;
}

.tools .split {
    gap: 1px;
    width: 24px;
}

.tools .split .arrow {
    width: 5px;
    height: 3px;
}

.sep {
    width: 1px;
    height: 14px;
    margin: 0 1px 0 2px;
    background-color: #dcdfe0;
}

.tools .t {
    display: block;
    color: #47685c;
    font-family: "Liberation Sans", sans-serif;
    font-size: 12px;
    font-weight: 700;
    line-height: 20px;
    text-align: center;
}

.tools .t.serif {
    font-family: "Liberation Serif", serif;
}

.tools .t.small {
    font-size: 8px;
}

.t sub,
.t sup {
    font-size: 7px;
    line-height: 0;
}

.glyph {
    font-family: "Liberation Sans", sans-serif;
    font-size: 7px;
    font-weight: 700;
    direction: ltr;
}

.glyph.blue { fill: #4356c5; }
.glyph.green { fill: #47685c; }
.glyph.help { fill: #3746b8; font-size: 11px; }
.glyph.ps { fill: #fff; font-size: 7px; }

.rule {
    stroke: #47685c;
    stroke-width: 1.2;
}

.combo {
    justify-content: space-between;
    width: 73px;
    height: 16px;
    padding-right: 5px;
    border-bottom: 1px solid #dadada;
    border-radius: 3px;
    box-shadow: 1px 0 0 #eee;
    color: #888;
    font-family: "DejaVu Sans", sans-serif;
    font-size: 7px;
}

.combo.short {
    width: 44px;
}

.combo-arrow {
    width: 15px;
    height: 15px;
    border: 1px solid #c9c3c3;
    border-radius: 3px;
    background-color: #dcd6d6;
    fill: #555;
}

.collapse {
    position: absolute;
    bottom: 3px;
    left: 4px;
    width: 10px;
    height: 10px;
    border: 1px solid #bbb;
}

.collapse svg {
    width: 8px;
    height: 8px;
}

.editor-body {
    flex: 1;
    width: 100%;
    border: 0;
    resize: none;
}

.resizer {
    align-self: flex-end;
    width: 10px;
    height: 10px;
    margin: 0 0 6px 4px;
}

/* scrollbar */
.scrollbar {
    display: flex;
    flex-direction: column;
    flex: none;
    width: 14px;
    background-color: #f0f0f0;
}

.track {
    flex: 1;
}

.thumb {
    height: 55%;
    background-color: #cdcdcd;
}

/* taskbar */
.taskbar {
    display: flex;
    justify-content: space-between;
    flex: none;
    height: 34px;
    background: linear-gradient(to right, #26363e, #283236 65%, #1c2d34);
    color: #fff;
}

.apps {
    display: flex;
}

.apps button {
    position: relative;
    width: 41px;
    height: 34px;
}

.apps svg {
    width: 20px;
    height: 20px;
}

.apps .current {
    background-color: #58656a;
}

.apps .running::after {
    content: "";
    position: absolute;
    bottom: 0;
    left: 4px;
    right: 3px;
    height: 2px;
    background-color: #76b9ed;
}

.apps .current::after {
    left: 0;
    right: 0;
}

.count {
    position: absolute;
    right: 8px;
    bottom: 5px;
    border-radius: 2px;
    background-color: #8d9599;
    font-size: 7px;
    line-height: 9px;
}

.tray {
    display: flex;
    align-items: center;
    gap: 13px;
    padding-right: 3px;
}

.clock {
    display: flex;
    flex-direction: column;
    align-items: flex-end;
    margin: 0 -13px 0 -5px;
    font-size: 9px;
    line-height: 15px;
}

.notify {
    position: relative;
    width: 46px;
    height: 34px;
    border-right: 1px solid #55646a;
}

.notify-icon {
    width: 15px;
    height: 15px;
}

.badge {
    position: absolute;
    right: 11px;
    bottom: 3px;
    width: 13px;
    height: 13px;
    border: 1px solid #8a9498;
    border-radius: 50%;
    background-color: #3a464b;
    font-size: 8px;
    line-height: 11px;
}
```
